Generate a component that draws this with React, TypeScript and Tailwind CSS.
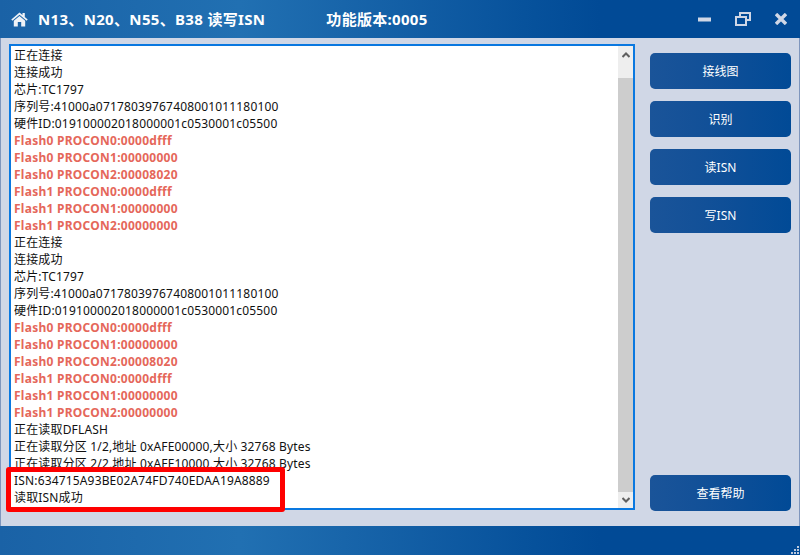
const lines: [string, boolean][] = [
  ["正在连接", false],
  ["连接成功", false],
  ["芯片:TC1797", false],
  ["序列号:41000a07178039767408001011180100", false],
  ["硬件ID:019100002018000001c0530001c05500", false],
  ["Flash0 PROCON0:0000dfff", true],
  ["Flash0 PROCON1:00000000", true],
  ["Flash0 PROCON2:00008020", true],
  ["Flash1 PROCON0:0000dfff", true],
  ["Flash1 PROCON1:00000000", true],
  ["Flash1 PROCON2:00000000", true],
  ["正在连接", false],
  ["连接成功", false],
  ["芯片:TC1797", false],
  ["序列号:41000a07178039767408001011180100", false],
  ["硬件ID:019100002018000001c0530001c05500", false],
  ["Flash0 PROCON0:0000dfff", true],
  ["Flash0 PROCON1:00000000", true],
  ["Flash0 PROCON2:00008020", true],
  ["Flash1 PROCON0:0000dfff", true],
  ["Flash1 PROCON1:00000000", true],
  ["Flash1 PROCON2:00000000", true],
  ["正在读取DFLASH", false],
  ["正在读取分区 1/2,地址 0xAFE00000,大小 32768 Bytes", false],
  ["正在读取分区 2/2,地址 0xAFE10000,大小 32768 Bytes", false],
  ["ISN:634715A93BE02A74FD740EDAA19A8889", false],
  ["读取ISN成功", false],
];

const btn =
  "flex h-9 w-[141px] items-center justify-center rounded-[5px] bg-gradient-to-r from-[#1a5499] to-[#014a96] pt-[1px] text-[12px] text-white";

export default function App() {
  return (
    <div className="relative flex h-[555px] w-[800px] flex-col overflow-hidden bg-[#034a95] font-['Noto_Sans','Noto_Sans_CJK_SC',sans-serif]">
      <header className="flex h-[38px] items-center bg-gradient-to-r from-[#1a62a6] via-[#2170b2] via-30% to-[#014a96] to-[75%] text-white">
        <svg className="ml-[11px] h-[15px] w-[17px]" viewBox="0 0 17 15" fill="#eef2f7">
          <path d="M8.5 0.5 L0.3 7.6 L1.4 8.8 L8.5 2.8 L15.6 8.8 L16.7 7.6 L13.8 5.1 V1 H11.5 V3.1 Z" />
          <path d="M8.5 4 L2.8 8.8 V14.5 H6.8 V10 H10.2 V14.5 H14.2 V8.8 Z" />
        </svg>
        <span className="ml-[10px] text-[15px] font-bold tracking-[0.33px]">N13、N20、N55、B38 读写ISN</span>
        <span className="ml-[61px] text-[15px] font-bold tracking-[0.3px]">功能版本:0005</span>
        <div className="ml-auto mr-[13px] flex items-center gap-[24px]">
          <svg width="13" height="5" viewBox="0 0 13 5"><rect y="0.5" width="13" height="4" fill="#d0d7e6" /></svg>
          <svg width="16" height="14" viewBox="0 0 16 14" fill="none" stroke="#d0d7e6" strokeWidth="2">
            <path d="M5 4 V1 H15 V8 H11" />
            <rect x="1" y="5" width="10" height="8" />
          </svg>
          <svg width="12" height="12" viewBox="0 0 12 12" stroke="#d0d7e6" strokeWidth="3.4"><path d="M1 1 L11 11 M11 1 L1 11" /></svg>
        </div>
      </header>
      <main className="flex h-[488px] border-x border-[#7f96bd] bg-[#d0d7e6] pt-[6px]">
        <div className="ml-2 flex h-[466px] w-[626px] border-2 border-[#0a78e0] bg-white">
          <div className="flex-1 overflow-hidden pl-[3px] pt-[1px] text-[12px] leading-[17px] tracking-[0.16px] text-[#111]">
            {lines.map(([text, red], i) => (
              <div key={i} className={red ? "whitespace-nowrap font-bold tracking-[0.26px] text-[#e5675a]" : "whitespace-nowrap"}>
                {text}
              </div>
            ))}
          </div>
          <div className="flex w-[15px] flex-col bg-[#cdcdcd]">
            <div className="flex h-[32px] items-start justify-center bg-[#eeeeee] pt-[6px]">
              <svg width="8" height="6" viewBox="0 0 8 6" fill="none" stroke="#606060" strokeWidth="2"><path d="M0.5 5 L4 1.5 L7.5 5" /></svg>
            </div>
            <div className="flex-1" />
            <div className="flex h-[16px] items-center justify-center bg-[#eeeeee]">
              <svg width="8" height="6" viewBox="0 0 8 6" fill="none" stroke="#606060" strokeWidth="2"><path d="M0.5 1 L4 4.5 L7.5 1" /></svg>
            </div>
          </div>
        </div>
        <div className="ml-[15px] flex h-[467px] flex-col gap-3 pt-[9px]">
          <div className={btn}>接线图</div>
          <div className={btn}>识别</div>
          <div className={btn}>读ISN</div>
          <div className={btn}>写ISN</div>
          <div className={`${btn} mt-auto`}>查看帮助</div>
        </div>
      </main>
      <div className="flex-1 bg-gradient-to-r from-[#1a62a6] via-[#2170b2] via-30% to-[#014a96] to-[75%]" />
      <svg className="absolute bottom-[1px] right-[1px]" width="8" height="8" viewBox="0 0 8 8" fill="#b9c7dc">
        <rect x="6" y="0" width="2" height="2" /><rect x="3" y="3" width="2" height="2" /><rect x="6" y="3" width="2" height="2" />
        <rect x="0" y="6" width="2" height="2" /><rect x="3" y="6" width="2" height="2" /><rect x="6" y="6" width="2" height="2" />
      </svg>
      <div className="absolute left-[6px] top-[467px] h-[45px] w-[279px] rounded-[3px] border-[5px] border-[#fe0000]" />
    </div>
  );
}
